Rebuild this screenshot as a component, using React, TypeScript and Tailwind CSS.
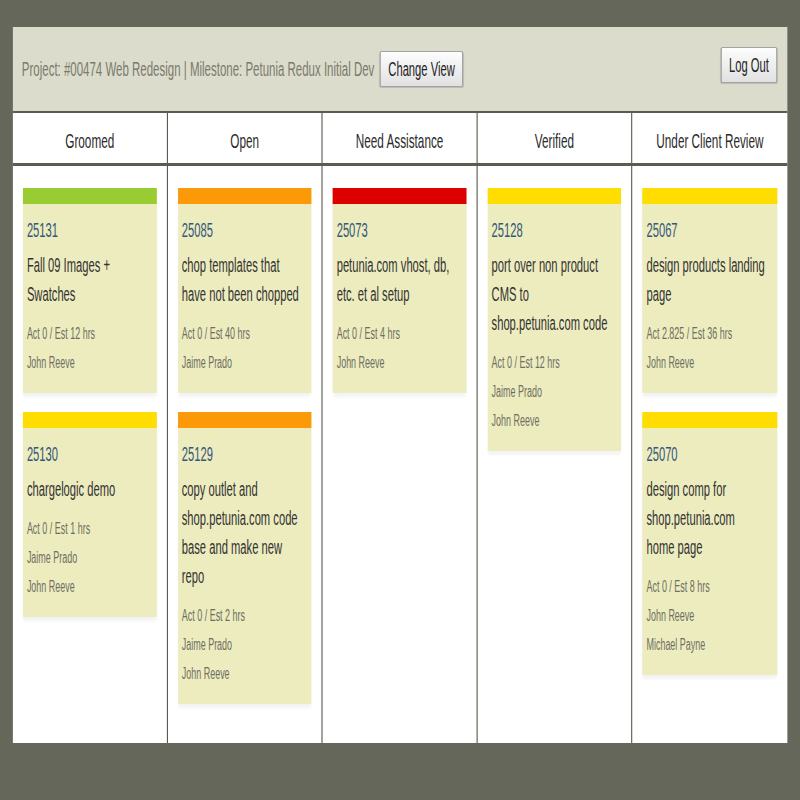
type Card = {
  id: string;
  bar: string;
  title: string;
  hours: string;
  people: string[];
};

type Column = { name: string; cards: Card[] };

const COLUMNS: Column[] = [
  {
    name: "Groomed",
    cards: [
      { id: "25131", bar: "bg-[#99cc33]", title: "Fall 09 Images + Swatches", hours: "Act 0 / Est 12 hrs", people: ["John Reeve"] },
      { id: "25130", bar: "bg-[#ffdd00]", title: "chargelogic demo", hours: "Act 0 / Est 1 hrs", people: ["Jaime Prado", "John Reeve"] },
    ],
  },
  {
    name: "Open",
    cards: [
      { id: "25085", bar: "bg-[#fb9908]", title: "chop templates that have not been chopped", hours: "Act 0 / Est 40 hrs", people: ["Jaime Prado"] },
      { id: "25129", bar: "bg-[#fb9908]", title: "copy outlet and shop.petunia.com code base and make new repo", hours: "Act 0 / Est 2 hrs", people: ["Jaime Prado", "John Reeve"] },
    ],
  },
  {
    name: "Need Assistance",
    cards: [
      { id: "25073", bar: "bg-[#dd0000]", title: "petunia.com vhost, db, etc. et al setup", hours: "Act 0 / Est 4 hrs", people: ["John Reeve"] },
    ],
  },
  {
    name: "Verified",
    cards: [
      { id: "25128", bar: "bg-[#ffdd00]", title: "port over non product CMS to shop.petunia.com code", hours: "Act 0 / Est 12 hrs", people: ["Jaime Prado", "John Reeve"] },
    ],
  },
  {
    name: "Under Client Review",
    cards: [
      { id: "25067", bar: "bg-[#ffdd00]", title: "design products landing page", hours: "Act 2.825 / Est 36 hrs", people: ["John Reeve"] },
      // keep "home page" together so it wraps like the original board
      { id: "25070", bar: "bg-[#ffdd00]", title: "design comp for shop.petunia.com home\u00a0page", hours: "Act 0 / Est 8 hrs", people: ["John Reeve", "Michael Payne"] },
    ],
  },
];

const btn =
  "h-[36px] rounded-[3px] border-y border-x-2 border-[#a3a3a3] bg-gradient-to-b from-[#fdfdfd] to-[#e1e1e1] px-[13px] text-[20px] text-[#222] shadow-[0_1px_1px_rgba(0,0,0,0.15)]";

function TaskCard({ card }: { card: Card }) {
  return (
    <div className="mb-[19px] bg-[#ececbe] shadow-[0_4px_4px_rgba(0,0,0,0.05)]">
      <div className={`h-[16px] ${card.bar}`} />
      <div className="pt-[12px] pb-[16px] pl-[7px] pr-[18px]">
        <div className="text-[20px] leading-[29px] text-[#36577b]">{card.id}</div>
        <div className="mt-[6px] text-[20px] leading-[29px] text-[#333]">{card.title}</div>
        <div className="mt-[10px] text-[16px] leading-[29px] text-[#6e6e62]">
          <div>{card.hours}</div>
          {card.people.map((p) => (
            <div key={p}>{p}</div>
          ))}
        </div>
      </div>
    </div>
  );
}

export default function App() {
  return (
    <div className="min-h-screen w-full overflow-hidden bg-[#65675a]">
      {/* board is laid out wide, then squeezed to the narrow look of the screenshot */}
      <div
        className="w-[1429px] origin-top-left scale-x-[0.56] px-[23px] pt-[27px]"
        style={{ fontFamily: '"Liberation Sans", Arial, sans-serif' }}
      >
        <div className="flex h-[86px] items-start justify-between border-b-2 border-[#5a5c4f] bg-[#dcdccc] pl-[16px] pr-[18px] pt-[20px]">
          <div className="mt-[4px] flex items-center gap-[10px]">
            <span className="text-[20.5px] text-[#7a7a6d]">
              Project: #00474 Web Redesign | Milestone: Petunia Redux Initial Dev
            </span>
            <button type="button" className={btn}>
              Change View
            </button>
          </div>
          <button type="button" className={btn}>
            Log Out
          </button>
        </div>

        <div className="grid grid-cols-5 divide-x-2 divide-[#5a5c4f] border-b-[3px] border-[#5a5c4f] bg-white">
          {COLUMNS.map((c) => (
            <div key={c.name} className="flex h-[50px] items-center justify-center pt-[5px] text-[21px] text-[#2a2a2a]">
              {c.name}
            </div>
          ))}
        </div>

        <div className="grid grid-cols-5 divide-x-2 divide-[#5a5c4f] bg-white">
          {COLUMNS.map((c) => (
            <div key={c.name} className="px-[18px] pt-[22px] pb-[20px]">
              {c.cards.map((card) => (
                <TaskCard key={card.id} card={card} />
              ))}
            </div>
          ))}
        </div>
      </div>
    </div>
  );
}
